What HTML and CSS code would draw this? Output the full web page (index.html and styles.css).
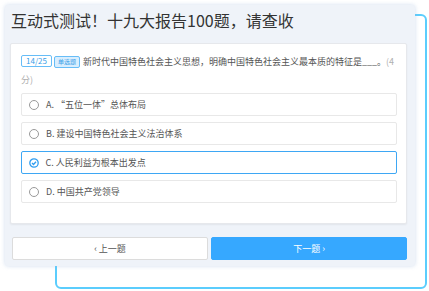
FILE: index.html
```html
<!DOCTYPE html>
<html lang="zh-CN">
<head>
  <meta charset="UTF-8">
  <title>互动式测试</title>
  <link rel="stylesheet" href="styles.css">
</head>
<body>
  <div class="stage">
    <!-- decorative frame behind the panel -->
    <div class="frame"></div>
    <section class="panel">
      <h1 class="title">互动式测试！十九大报告100题，请查收</h1>
      <div class="card">
        <p class="question">
          <span class="tag tag-num">14/25</span><span class="tag tag-type">单选题</span>新时代中国特色社会主义思想，明确中国特色社会主义最本质的特征是___。<span class="score">(4分)</span>
        </p>
        <ul class="options">
          <li class="option"><span class="radio"></span>A. “五位一体”总体布局</li>
          <li class="option"><span class="radio"></span>B. 建设中国特色社会主义法治体系</li>
          <li class="option selected">
            <svg class="check" width="10" height="10" viewBox="0 0 10 10">
              <circle cx="5" cy="5" r="4.2" fill="none" stroke="#2f9df0" stroke-width="1.3"/>
              <path d="M3 5.1 L4.5 6.5 L7 3.8" fill="none" stroke="#2f9df0" stroke-width="1.3"/>
            </svg>C. 人民利益为根本出发点
          </li>
          <li class="option"><span class="radio"></span>D. 中国共产党领导</li>
        </ul>
      </div>
      <div class="actions">
        <button class="btn btn-prev">‹ 上一题</button>
        <button class="btn btn-next">下一题 ›</button>
      </div>
    </section>
  </div>
</body>
</html>
```

FILE: styles.css
```css
/* Base */
body {
  margin: 0;
  background: #fff;
  font-family: "Noto Sans CJK SC", "Noto Sans", sans-serif;
  color: #555;
}
.stage {
  position: relative;
  width: 429px;
  height: 291px;
  overflow: hidden;
}
.frame {
  position: absolute;
  left: 55px;
  top: 14px;
  width: 368px;
  height: 271px;
  border: 2px solid #5bcdfd;
  border-radius: 6px;
}
/* Panel */
.panel {
  position: relative;
  margin: 5px 0 0 5px;
  width: 410px;
  height: 261px;
  box-sizing: border-box;
  padding: 5px 8px 7px 5px;
  background: #eff3f9;
  border-radius: 3px;
  box-shadow: 0 0 4px rgba(150, 180, 220, 0.45);
}
.title {
  margin: 0 0 13px 1px;
  height: 20px;
  font-size: 16px;
  font-weight: normal;
  line-height: 20px;
  color: #333;
}
/* Question card */
.card {
  background: #fff;
  border: 1px solid #e6e8ec;
  border-radius: 2px;
  box-shadow: 0 1px 2px rgba(0, 0, 0, 0.06);
  padding: 9px 9px 20px 10px;
}
.question {
  margin: 0;
  font-size: 9px;
  line-height: 18px;
  color: #555;
}
.tag {
  display: inline-block;
  height: 10px;
  line-height: 10px;
  padding: 0 3px;
  margin-right: 3px;
  border: 1px solid #67bdf7;
  border-radius: 2px;
  font-size: 7px;
  color: #3a9ee8;
  vertical-align: 1px;
}
.tag-num {
  padding: 0 4px;
  margin-right: 2px;
  font-size: 8px;
}
.tag-type {
  background: #d9eefe;
  font-size: 6px;
}
.score {
  color: #b0b0b0;
}
.options {
  list-style: none;
  margin: 4px 0 0;
  padding: 0;
  display: flex;
  flex-direction: column;
  gap: 6px;
}
.option {
  display: flex;
  align-items: center;
  gap: 7px;
  height: 23px;
  box-sizing: border-box;
  padding-left: 7px;
  border: 1px solid #e8e8e8;
  border-radius: 2px;
  font-size: 9px;
  color: #555;
}
.option.selected {
  border: 1.5px solid #3ea7f4;
  padding-left: 6.5px;
}
.radio {
  width: 8px;
  height: 8px;
  border: 1px solid #999;
  border-radius: 50%;
}
.check {
  display: block;
}
/* Buttons */
.actions {
  display: flex;
  gap: 3px;
  margin: 13px 0 0 2px;
}
.btn {
  flex: 1;
  height: 23px;
  font-family: inherit;
  font-size: 9px;
  border-radius: 2px;
  cursor: pointer;
}
.btn-prev {
  background: #fff;
  border: 1px solid #dcdcdc;
  color: #555;
}
.btn-next {
  background: #36a8ff;
  border: 1px solid #36a8ff;
  color: #fff;
}
```
